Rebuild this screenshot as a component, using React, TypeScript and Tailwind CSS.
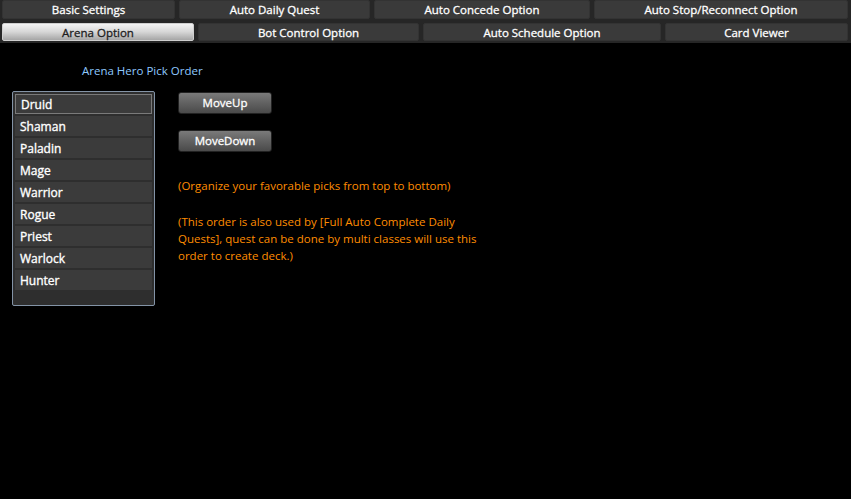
import React from "react";

const font = { fontFamily: '"Open Sans", "Noto Sans", sans-serif' };

function Tab({ label, w, selected }: { label: string; w: string; selected?: boolean }) {
  return (
    <div
      className={
        "flex items-center justify-center rounded-[2px] border text-[11.5px] leading-none font-normal pt-[1px] [-webkit-text-stroke:0.3px_currentColor] " +
        w +
        (selected
          ? " border-[#cfcfcf] bg-gradient-to-b from-[#f4f4f4] via-[#d6d6d6] to-[#a6a6a6] text-[#1e1e1e]"
          : " border-[#333333] bg-[#3a3a3a] text-white")
      }
    >
      {label}
    </div>
  );
}

const heroes = ["Druid", "Shaman", "Paladin", "Mage", "Warrior", "Rogue", "Priest", "Warlock", "Hunter"];

export default function App() {
  return (
    <div className="w-[851px] h-[499px] bg-black overflow-hidden" style={font}>
      <div className="h-[43px] bg-[#262626] px-[2px] flex flex-col gap-[4px]">
        <div className="flex gap-[4px] h-[19px]">
          <Tab label="Basic Settings" w="w-[173px]" />
          <Tab label="Auto Daily Quest" w="w-[191px]" />
          <Tab label="Auto Concede Option" w="w-[216px]" />
          <Tab label="Auto Stop/Reconnect Option" w="w-[254px]" />
        </div>
        <div className="flex gap-[4px] h-[18px]">
          <Tab label="Arena Option" w="w-[192px]" selected />
          <Tab label="Bot Control Option" w="w-[221px]" />
          <Tab label="Auto Schedule Option" w="w-[238px]" />
          <Tab label="Card Viewer" w="w-[183px]" />
        </div>
      </div>

      <div className="pl-[82px] pt-[20px] text-[11.5px] leading-[16px] text-[#8ec9ff]">Arena Hero Pick Order</div>

      <div className="flex pl-[12px] pt-[12px] gap-[23px]">
        <div className="w-[143px] h-[215px] border border-[#8393a6] bg-[#2e2e2e] rounded-[2px] px-[2px] pt-[2px] flex flex-col gap-[2px]">
          {heroes.map((h, i) => (
            <div
              key={h}
              className={
                "h-[20px] flex items-center pl-[5px] pt-[2px] text-[12px] font-normal [-webkit-text-stroke:0.35px_currentColor] text-white bg-[#3b3b3b] " +
                (i === 0 ? "border border-[#7a7a7a] pl-[4px]" : "")
              }
            >
              {h}
            </div>
          ))}
        </div>

        <div className="flex flex-col pt-[1px]">
          <button className="w-[94px] h-[22px] rounded-[3px] border border-[#222222] bg-gradient-to-b from-[#7a7a7a] to-[#4a4a4a] text-white text-[11.5px] font-normal [-webkit-text-stroke:0.3px_currentColor] flex items-center justify-center">
            MoveUp
          </button>
          <button className="mt-[16px] w-[94px] h-[22px] rounded-[3px] border border-[#222222] bg-gradient-to-b from-[#7a7a7a] to-[#4a4a4a] text-white text-[11.5px] font-normal [-webkit-text-stroke:0.3px_currentColor] flex items-center justify-center">
            MoveDown
          </button>
          <div className="mt-[25px] text-[11.5px] leading-[17px] text-[#ff8c00]">
            (Organize your favorable picks from top to bottom)
          </div>
          <div className="mt-[19px] w-[305px] text-[11.5px] leading-[17px] text-[#ff8c00]">
            (This order is also used by [Full Auto Complete Daily Quests], quest can be done by multi classes will use this order to create deck.)
          </div>
        </div>
      </div>
    </div>
  );
}
